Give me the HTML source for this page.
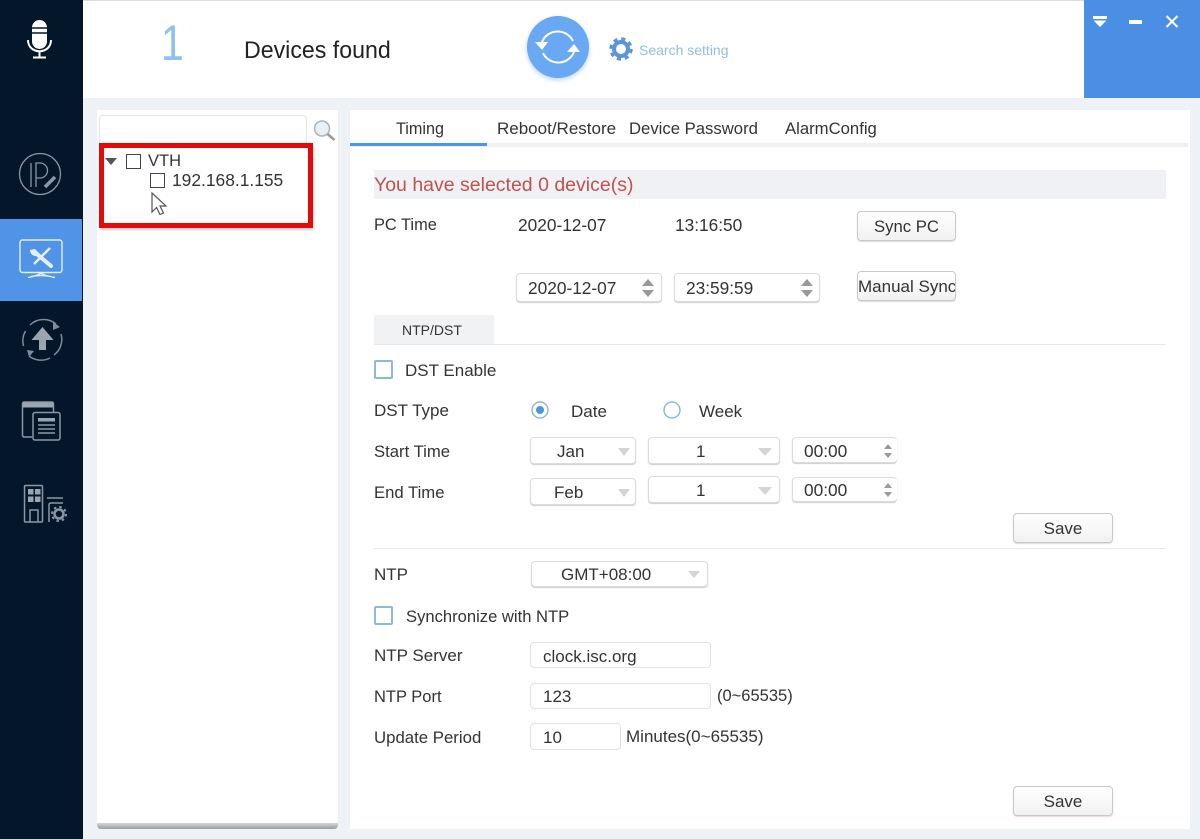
<!DOCTYPE html>
<html><head><meta charset="utf-8"><style>
html,body{margin:0;padding:0;width:1200px;height:839px;overflow:hidden;background:#eef1f5;font-family:"Liberation Sans",sans-serif;color:#333;font-size:17px}
.a{position:absolute}
.t{position:absolute;white-space:nowrap;line-height:20px}
.n{font-size:17.300px}
.box{position:absolute;box-sizing:border-box;background:#fff;border:1px solid #dcdcdc;border-radius:4px;box-shadow:0 1px 1px #ccc}
.btn{position:absolute;box-sizing:border-box;background:linear-gradient(#fff,#f1f1f1);border:1px solid #c8c8c8;border-radius:4px;text-align:center;box-shadow:0 1px 1px #ddd;white-space:nowrap;overflow:hidden}
.cb{position:absolute;box-sizing:border-box;border:1.5px solid #444;width:15px;height:15px}
.cb2{position:absolute;box-sizing:border-box;border:2px solid #8fb9d6;width:19px;height:19px;border-radius:2px;background:#fff}
.tri{position:absolute;width:0;height:0;border-left:7px solid transparent;border-right:7px solid transparent;border-top:8px solid #d4d4d4}
.up{position:absolute;width:0;height:0;border-left:6px solid transparent;border-right:6px solid transparent;border-bottom:7px solid #999}
.dn{position:absolute;width:0;height:0;border-left:6px solid transparent;border-right:6px solid transparent;border-top:7px solid #999}
.sup{position:absolute;width:0;height:0;border-left:4px solid transparent;border-right:4px solid transparent;border-bottom:5px solid #999}
.sdn{position:absolute;width:0;height:0;border-left:4px solid transparent;border-right:4px solid transparent;border-top:5px solid #999}
svg{position:absolute;overflow:visible}
</style></head><body>
<div class="a" style="left:0;top:0;width:83px;height:839px;background:#04162a"></div>
<div class="a" style="left:0;top:219px;width:82px;height:82px;background:#4f94e6"></div>
<div class="a" style="left:83px;top:0;width:1117px;height:98px;background:#fff"></div>
<div class="a" style="left:83px;top:0;width:1117px;height:1px;background:#ddd"></div>
<div class="a" style="left:1084px;top:0;width:116px;height:98px;background:#4a8fe3"></div>

<svg style="left:0;top:0" width="83" height="540" fill="none">
<rect x="32" y="20" width="15" height="29" rx="7.500" fill="#fff"/>
<path d="M32 28h15M32 33h15" stroke="#04162a" stroke-width="1.500"/>
<path d="M28 40c0 15 23 15 23 0" stroke="#fff" stroke-width="2"/>
<path d="M39.500 51v6M33 57.500h13" stroke="#fff" stroke-width="2"/>
<g stroke="#8b97a5" stroke-width="1.300">
<circle cx="40" cy="174" r="20.500"/>
<path d="M31 163v24M36 187v-24h4a7.500 7.500 0 0 1 0 15h-4"/>
</g>
<path d="M45 187l10-10" stroke="#8b97a5" stroke-width="3.500"/>
<g stroke="#e4f0fd" stroke-width="1.400">
<rect x="20" y="240" width="42" height="32.500" rx="2.500"/>
<path d="M28 277.500c5-1 10-2 13-4.500c3 2.500 8 3.500 14 4.500M31 276.500q10-2 20 0"/>
</g>
<path d="M38 255l13 11" stroke="#e4f0fd" stroke-width="4" stroke-linecap="round" fill="none"/>
<path d="M50 248l-16 16" stroke="#e4f0fd" stroke-width="2.500" fill="none"/>
<path d="M30 250c0 4 3 7 9 6l1-2-5-5z" fill="#e4f0fd"/>
<g stroke="#7f8b99" stroke-width="1.500">
<path d="M30 325a19.500 19.500 0 0 1 26-1M61 334a19.500 19.500 0 0 1-7 21M50 358a19.500 19.500 0 0 1-21-2M23.500 346a19.500 19.500 0 0 1 2-15"/>
</g>
<path d="M53 322l7 5-7 3zM27 350l7 1-5 6z" fill="#7f8b99"/>
<path d="M42.500 327l-11 13h7.500v10h7v-10h7.500z" fill="#9aa5b1"/>
<g stroke="#8b97a5" stroke-width="1.500">
<path d="M32 437h-7.500q-2 0-2-2v-31q0-2 2-2h27q2 0 2 2v8"/>
<rect x="23" y="402.500" width="30.500" height="5" fill="#9aa5b1" stroke="none"/>
<rect x="33" y="412.500" width="27" height="27.500" rx="2"/>
<path d="M38 425h17M38 429h17M38 433h17"/>
</g>
<rect x="38" y="418" width="17" height="3.500" fill="#9aa5b1"/>
<g stroke="#8b97a5" stroke-width="1.500">
<rect x="24.500" y="485.500" width="18" height="36.500" rx="1"/>
<path d="M30 522v-12h8v12M47 498h16M49 522v-17q0-2 2-2h12"/>
</g>
<path d="M28 489h5.500v5.500h-5.500zM35 489h5.500v5.500h-5.500zM28 496.500h5.500v5.500h-5.500zM35 496.500h5.500v5.500h-5.500z" fill="#9aa5b1"/>
<circle cx="59" cy="514" r="4.500" stroke="#8b97a5" stroke-width="2.500"/>
<circle cx="59" cy="514" r="7" stroke="#8b97a5" stroke-width="2" stroke-dasharray="2.500 3"/>
</svg>

<div class="t" style="left:161px;top:18px;font-size:50px;line-height:50px;color:#8ec0f3;transform:scaleX(.82);transform-origin:left">1</div>
<div class="t" style="left:244px;top:38px;font-size:24px;line-height:26px;color:#222;transform:scaleX(.965);transform-origin:left">Devices found</div>

<div class="a" style="left:527px;top:16px;width:62px;height:62px;border-radius:50%;background:#69a9f3;box-shadow:0 2px 5px #b9d6f7"></div>
<svg style="left:527px;top:16px" width="62" height="62" fill="none">
<path d="M15 26a17 17 0 0 1 31-1M47 36a17 17 0 0 1-31 1" stroke="#fff" stroke-width="2"/>
<path d="M8 26h13l-6 8zM40 36h13l-6-8z" fill="#fff"/>
</svg>
<svg style="left:609px;top:37px" width="24" height="24" viewBox="0 0 24 24">
<circle cx="12" cy="12" r="7" fill="none" stroke="#5a95dd" stroke-width="4"/>
<circle cx="12" cy="12" r="10" fill="none" stroke="#5a95dd" stroke-width="3.500" stroke-dasharray="4 3.850"/>
</svg>
<div class="t" style="left:639px;top:40px;font-size:14px;color:#94bce6">Search setting</div>

<svg style="left:1084px;top:0" width="116" height="40">
<path d="M9 16h14v3h-14zM9.500 20.500h13l-6.500 6.500z" fill="#fff"/>
<rect x="45" y="20" width="13" height="4" fill="#fff"/>
<path d="M82.500 16l11 11M93.500 16l-11 11" stroke="#fff" stroke-width="2" fill="none"/>
</svg>

<!-- left panel -->
<div class="a" style="left:97px;top:110px;width:241px;height:714px;background:#fff"></div>
<div class="a" style="left:97px;top:823px;width:241px;height:6px;background:linear-gradient(#d4d6d8,#9a9c9f);border-radius:0 0 4px 4px"></div>
<div class="a" style="left:99px;top:115px;width:208px;height:36px;box-sizing:border-box;background:#fff;border:1px solid #e4e4e4;border-radius:4px"></div>
<svg style="left:312px;top:119px" width="24" height="24" fill="none">
<circle cx="10" cy="9.500" r="7.500" stroke="#aab4bd" stroke-width="1.500" fill="#eaf0f4"/>
<path d="M15.500 15l7 6" stroke="#9a9a9a" stroke-width="2.500"/>
</svg>
<div class="a" style="left:99px;top:143px;width:214px;height:85px;box-sizing:border-box;border:5px solid #e20a0a;background:#fff;box-shadow:1px 2px 2px #ccc"></div>
<div class="a" style="left:105px;top:158px;width:0;height:0;border-left:6px solid transparent;border-right:6px solid transparent;border-top:7px solid #555"></div>
<div class="cb" style="left:126px;top:154px"></div>
<div class="t" style="left:148px;top:151px;font-size:16.500px;color:#334">VTH</div>
<div class="cb" style="left:150px;top:173px"></div>
<div class="t" style="left:172px;top:170px;font-size:17.400px">192.168.1.155</div>
<svg style="left:151px;top:192px" width="18" height="24">
<path d="M1 1v19l4.500-4.500 3.500 7 3.500-1.500-3.500-7h6z" fill="#fff" stroke="#555" stroke-width="1.200"/>
</svg>

<!-- right panel -->
<div class="a" style="left:350px;top:110px;width:840px;height:719px;background:#fff"></div>
<div class="a" style="left:350px;top:143px;width:838px;height:4px;background:#eef0f2"></div>
<div class="a" style="left:350px;top:143px;width:137px;height:3px;background:#4f94e0"></div>
<div class="t" style="left:396px;top:119px;font-size:16.200px">Timing</div>
<div class="t" style="left:497px;top:119px">Reboot/Restore</div>
<div class="t" style="left:629px;top:119px;font-size:16.700px">Device Password</div>
<div class="t" style="left:785px;top:119px;font-size:16.700px">AlarmConfig</div>

<div class="a" style="left:374px;top:170px;width:792px;height:29px;background:#eff1f4"></div>
<div class="t" style="left:374px;top:175px;font-size:19.500px;color:#c0534d">You have selected 0 device(s)</div>

<div class="t" style="left:374px;top:215px;font-size:16.400px">PC Time</div>
<div class="t n" style="left:518px;top:215px">2020-12-07</div>
<div class="t n" style="left:675px;top:215px">13:16:50</div>
<div class="btn" style="left:857px;top:211px;width:99px;height:30px;line-height:30px;font-size:16.700px">Sync PC</div>

<div class="box" style="left:516px;top:273px;width:146px;height:29px"></div>
<div class="t n" style="left:528px;top:278px">2020-12-07</div>
<div class="up" style="left:642px;top:279px"></div><div class="dn" style="left:642px;top:290px"></div>
<div class="box" style="left:674px;top:273px;width:146px;height:29px"></div>
<div class="t n" style="left:686px;top:278px">23:59:59</div>
<div class="up" style="left:801px;top:279px"></div><div class="dn" style="left:801px;top:290px"></div>
<div class="btn" style="left:857px;top:271px;width:99px;height:30px;line-height:29px;text-align:left">Manual Sync</div>

<div class="a" style="left:374px;top:315px;width:120px;height:29px;background:#f1f2f4"></div>
<div class="t" style="left:402px;top:320px;font-size:14px">NTP/DST</div>
<div class="a" style="left:374px;top:344px;width:792px;height:1px;background:#e8e8e8"></div>

<div class="cb2" style="left:374px;top:360px"></div>
<div class="t" style="left:405px;top:361px">DST Enable</div>

<div class="t" style="left:374px;top:401px">DST Type</div>
<svg style="left:530px;top:401px" width="150" height="20" fill="none">
<circle cx="10" cy="9" r="8" stroke="#8fb9d6" stroke-width="1.500"/><circle cx="10" cy="9" r="4" fill="#4f94e0"/>
<circle cx="142" cy="9" r="8" stroke="#8fb9d6" stroke-width="1.500"/>
</svg>
<div class="t" style="left:571px;top:402px">Date</div>
<div class="t" style="left:699px;top:402px">Week</div>

<div class="t" style="left:374px;top:442px;font-size:16.700px">Start Time</div>
<div class="box" style="left:530px;top:437px;width:106px;height:27px"></div>
<div class="t" style="left:557px;top:442px">Jan</div><div class="tri" style="left:618px;top:448px;border-left-width:6px;border-right-width:6px"></div>
<div class="box" style="left:648px;top:437px;width:132px;height:27px"></div>
<div class="t" style="left:696px;top:442px">1</div><div class="tri" style="left:758px;top:448px"></div>
<div class="box" style="left:792px;top:437px;width:105px;height:26px;border-right:0"></div>
<div class="t n" style="left:804px;top:441px">00:00</div>
<div class="sup" style="left:884px;top:444px"></div><div class="sdn" style="left:884px;top:453px"></div>

<div class="t" style="left:374px;top:483px;font-size:16.700px">End Time</div>
<div class="box" style="left:530px;top:478px;width:106px;height:27px"></div>
<div class="t" style="left:554px;top:483px">Feb</div><div class="tri" style="left:618px;top:489px;border-left-width:6px;border-right-width:6px"></div>
<div class="box" style="left:648px;top:476px;width:132px;height:27px"></div>
<div class="t" style="left:696px;top:481px">1</div><div class="tri" style="left:758px;top:487px"></div>
<div class="box" style="left:792px;top:477px;width:105px;height:25px;border-right:0"></div>
<div class="t n" style="left:804px;top:480px">00:00</div>
<div class="sup" style="left:884px;top:483px"></div><div class="sdn" style="left:884px;top:492px"></div>

<div class="btn" style="left:1013px;top:513px;width:100px;height:30px;line-height:30px">Save</div>
<div class="a" style="left:374px;top:548px;width:792px;height:1px;background:#e8e8e8"></div>

<div class="t" style="left:374px;top:565px">NTP</div>
<div class="box" style="left:531px;top:561px;width:177px;height:26px"></div>
<div class="t" style="left:561px;top:565px">GMT+08:00</div><div class="tri" style="left:688px;top:571px;border-left-width:6px;border-right-width:6px;border-top-width:7px"></div>

<div class="cb2" style="left:374px;top:606px"></div>
<div class="t" style="left:406px;top:607px;font-size:16.600px">Synchronize with NTP</div>

<div class="t" style="left:374px;top:646px">NTP Server</div>
<div class="box" style="left:530px;top:642px;width:181px;height:26px;box-shadow:none;border-color:#e2e2e2"></div>
<div class="t" style="left:543px;top:647px">clock.isc.org</div>

<div class="t" style="left:374px;top:687px;font-size:16.500px">NTP Port</div>
<div class="box" style="left:530px;top:683px;width:181px;height:26px;box-shadow:none;border-color:#e2e2e2"></div>
<div class="t" style="left:543px;top:687px">123</div>
<div class="t" style="left:717px;top:686px;font-size:16.500px">(0~65535)</div>

<div class="t" style="left:374px;top:728px;font-size:16.800px">Update Period</div>
<div class="box" style="left:530px;top:723px;width:91px;height:27px;box-shadow:none;border-color:#e2e2e2"></div>
<div class="t" style="left:543px;top:728px">10</div>
<div class="t" style="left:626px;top:727px">Minutes(0~65535)</div>

<div class="btn" style="left:1013px;top:786px;width:100px;height:30px;line-height:30px">Save</div>
</body></html>
